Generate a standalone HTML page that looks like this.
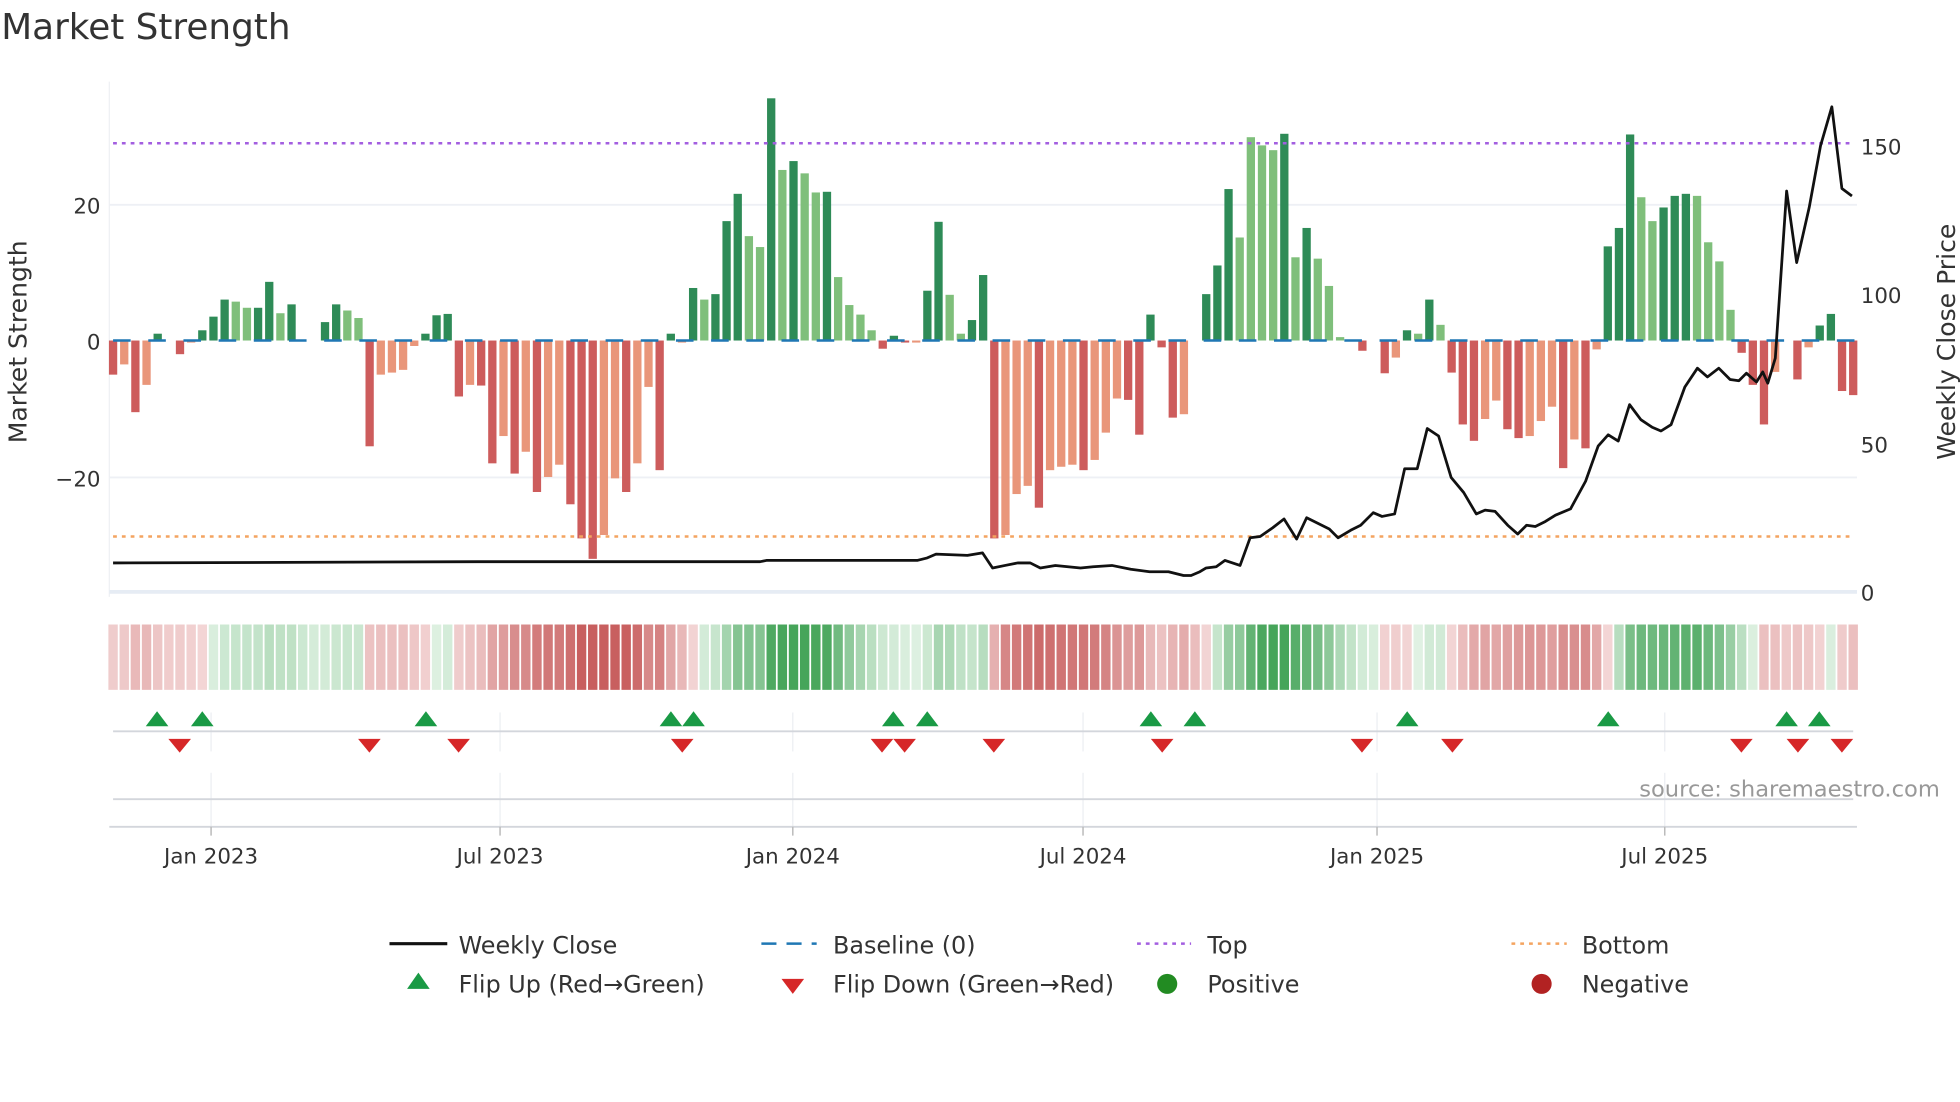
<!DOCTYPE html>
<html><head><meta charset="utf-8"><style>
html,body{margin:0;padding:0;background:#fff;width:1960px;height:1102px;overflow:hidden}
svg{display:block}
text{font-family:"DejaVu Sans","Liberation Sans",sans-serif;fill:#333}
</style></head><body>
<svg id="s" width="1960" height="1102" viewBox="0 0 1560 877" preserveAspectRatio="none" xmlns="http://www.w3.org/2000/svg">
<text x="1" y="31" font-size="28.5" fill="#333">Market Strength</text>
<line x1="87" y1="65" x2="87" y2="475" stroke="#eef0f4" stroke-width="1"/>
<line x1="87" y1="163" x2="1478" y2="163" stroke="#eef0f5" stroke-width="1.5"/>
<line x1="87" y1="380" x2="1478" y2="380" stroke="#eef0f5" stroke-width="1.5"/>
<line x1="87" y1="471" x2="1478" y2="471" stroke="#e6ecf4" stroke-width="3"/>
<text x="80" y="170" font-size="17" text-anchor="end">20</text>
<text x="80" y="278" font-size="17" text-anchor="end">0</text>
<text x="80" y="387" font-size="17" text-anchor="end">−20</text>
<text x="1481" y="123" font-size="17">150</text>
<text x="1481" y="241" font-size="17">100</text>
<text x="1481" y="360" font-size="17">50</text>
<text x="1481" y="478" font-size="17">0</text>
<text transform="translate(21,272) rotate(-90)" font-size="20" text-anchor="middle">Market Strength</text>
<text transform="translate(1556,272) rotate(-90)" font-size="20" text-anchor="middle">Weekly Close Price</text>
<g id="bars"></g>
<line x1="90" y1="271" x2="1476" y2="271" stroke="#1f77b4" stroke-width="2" stroke-dasharray="14,14"/>
<line x1="90" y1="114" x2="1476" y2="114" stroke="#a35ee0" stroke-width="2" stroke-dasharray="3,4"/>
<line x1="90" y1="427" x2="1476" y2="427" stroke="#f4a460" stroke-width="2" stroke-dasharray="3,4"/>
<polyline id="price" fill="none" stroke="#111" stroke-width="2.2" stroke-linejoin="round"/>
<g id="heat"></g>
<g stroke="#eceef2" stroke-width="1">
<line x1="168" y1="567" x2="168" y2="598"/><line x1="398" y1="567" x2="398" y2="598"/><line x1="631" y1="567" x2="631" y2="598"/><line x1="862" y1="567" x2="862" y2="598"/><line x1="1096" y1="567" x2="1096" y2="598"/><line x1="1325" y1="567" x2="1325" y2="598"/>
<line x1="168" y1="615" x2="168" y2="658"/><line x1="398" y1="615" x2="398" y2="658"/><line x1="631" y1="615" x2="631" y2="658"/><line x1="862" y1="615" x2="862" y2="658"/><line x1="1096" y1="615" x2="1096" y2="658"/><line x1="1325" y1="615" x2="1325" y2="658"/>
</g>
<line x1="90" y1="582" x2="1475" y2="582" stroke="#d3d6dc" stroke-width="1.5"/>
<line x1="90" y1="636" x2="1475" y2="636" stroke="#d3d6dc" stroke-width="1.5"/>
<line x1="87" y1="658" x2="1478" y2="658" stroke="#d3d6dc" stroke-width="1.5"/>
<g stroke="#bbb" stroke-width="1.2"><line x1="168" y1="658" x2="168" y2="665"/><line x1="398" y1="658" x2="398" y2="665"/><line x1="631" y1="658" x2="631" y2="665"/><line x1="862" y1="658" x2="862" y2="665"/><line x1="1096" y1="658" x2="1096" y2="665"/><line x1="1325" y1="658" x2="1325" y2="665"/></g>
<g id="marks"></g>
<text x="1544" y="634" font-size="18" text-anchor="end" style="fill:#999">source: sharemaestro.com</text>
<g font-size="17" text-anchor="middle">
<text x="168" y="687">Jan 2023</text><text x="398" y="687">Jul 2023</text><text x="631" y="687">Jan 2024</text><text x="862" y="687">Jul 2024</text><text x="1096" y="687">Jan 2025</text><text x="1325" y="687">Jul 2025</text>
</g>
<line x1="310" y1="751" x2="356" y2="751" stroke="#111" stroke-width="2.5"/>
<text x="365" y="759" font-size="19">Weekly Close</text>
<line x1="606" y1="751" x2="650" y2="751" stroke="#1f77b4" stroke-width="2" stroke-dasharray="12,8"/>
<text x="663" y="759" font-size="19">Baseline (0)</text>
<line x1="905" y1="751" x2="948" y2="751" stroke="#a35ee0" stroke-width="2" stroke-dasharray="3,4"/>
<text x="961" y="759" font-size="19">Top</text>
<line x1="1203" y1="751" x2="1247" y2="751" stroke="#f4a460" stroke-width="2" stroke-dasharray="3,4"/>
<text x="1259" y="759" font-size="19">Bottom</text>
<polygon points="333,774 342,787 324,787" fill="#1a9a45"/>
<text x="365" y="790" font-size="19">Flip Up (Red→Green)</text>
<polygon points="622,779 640,779 631,791" fill="#d62728"/>
<text x="663" y="790" font-size="19">Flip Down (Green→Red)</text>
<circle cx="929" cy="783" r="8" fill="#228b22"/>
<text x="961" y="790" font-size="19">Positive</text>
<circle cx="1227" cy="783" r="8" fill="#b22222"/>
<text x="1259" y="790" font-size="19">Negative</text>
</svg>
<script>
var V="-5R,-3.5O,-10.5R,-6.5O,1D,0,-2R,-0.3O,1.5D,3.5D,6D,5.7L,4.8L,4.8D,8.6D,4L,5.3D,0,0,2.7D,5.3D,4.4L,3.3L,-15.5R,-5O,-4.7O,-4.3O,-0.8O,1D,3.7D,3.9D,-8.2R,-6.5O,-6.6R,-18R,-14O,-19.5R,-16.3O,-22.2R,-20O,-18.2O,-24R,-29R,-32R,-28.5O,-20.2O,-22.2R,-18O,-6.8O,-19R,1D,-0.3O,7.7D,6L,6.8D,17.5D,21.5D,15.3L,13.7L,35.5D,25L,26.3D,24.5L,21.7L,21.8D,9.3L,5.2L,3.8L,1.5L,-1.2R,0.7D,-0.3R,-0.3O,7.3D,17.4D,6.7L,1L,3D,9.6D,-29R,-28.5O,-22.5O,-21.3O,-24.5R,-19O,-18.5O,-18.2O,-19R,-17.5O,-13.5O,-8.5O,-8.7R,-13.8R,3.8D,-1R,-11.3R,-10.8O,0,6.8D,11D,22.2D,15.1L,29.8L,28.6L,27.9L,30.3D,12.2L,16.5D,12L,8L,0.5L,0,-1.5R,0,-4.8R,-2.5O,1.5D,1L,6D,2.3L,-4.7R,-12.3R,-14.7R,-11.5O,-8.8O,-13R,-14.3R,-14O,-11.8O,-9.7O,-18.7R,-14.5O,-15.8R,-1.3O,13.8D,16.5D,30.2D,21L,17.5L,19.5D,21.2D,21.5D,21.2L,14.4L,11.6L,4.5L,-1.8R,-6.5R,-12.3R,-4.6O,0,-5.7R,-1O,2.2D,3.9D,-7.4R,-8R".split(",");
var C={D:"#2e8b57",L:"#7fbf7b",R:"#cd5c5c",O:"#e9967a"};
var ns="http://www.w3.org/2000/svg",b=document.getElementById("bars"),h=document.getElementById("heat");
var n=V.length,x0=90,dx=(1475-90)/(n-1),s=0;
function mix(a,c,t){return "rgb("+[0,1,2].map(function(i){return Math.round(a[i]+(c[i]-a[i])*t)}).join(",")+")"}
for(var i=0;i<n;i++){var v=parseFloat(V[i]),c=V[i].slice(-1),x=x0+i*dx;
 if(v!==0&&C[c]){var r=document.createElementNS(ns,"rect");var y=v>0?271-v*5.43:271;r.setAttribute("x",x-3.3);r.setAttribute("width",6.6);r.setAttribute("y",y);r.setAttribute("height",Math.abs(v)*5.43);r.setAttribute("fill",C[c]);b.appendChild(r);}
 s=0.6*s+0.4*v;var t=Math.min(Math.abs(s)/24,1);var col=s>=0?mix([225,242,228],[70,165,90],t):mix([243,214,214],[200,95,95],t);
 var q=document.createElementNS(ns,"rect");q.setAttribute("x",x-dx/2+0.7);q.setAttribute("width",dx-1.4);q.setAttribute("y",497);q.setAttribute("height",52);q.setAttribute("fill",col);h.appendChild(q);}
var P="90,448 380,447 605,447 610,446 730,446 738,444 745,441 770,442 782,440 790,452 800,450 810,448 820,448 828,452 840,450 860,452 870,451 885,450 900,453 915,455 930,455 942,458 948,458 955,455 960,452 968,451 975,446 987,450 995,428 1003,427 1013,420 1022,413 1032,429 1040,412 1050,417 1058,421 1065,428 1075,422 1083,418 1093,408 1100,411 1110,409 1118,373 1128,373 1136,341 1145,347 1155,380 1165,392 1175,409 1182,406 1190,407 1200,418 1208,425 1215,418 1222,419 1230,415 1238,410 1250,405 1262,383 1272,355 1280,346 1288,351 1297,322 1306,334 1315,340 1322,343 1330,338 1341,308 1351,293 1359,300 1368,293 1377,302 1384,303 1390,297 1398,304 1403,296 1407,305 1413,285 1422,152 1430,209 1440,165 1449,116 1458,85 1466,150 1474,156";
document.getElementById("price").setAttribute("points",P);
var m=document.getElementById("marks");
[125,161,339,534,552,711,738,916,951,1120,1280,1422,1448].forEach(function(x){var p=document.createElementNS(ns,"polygon");p.setAttribute("points",(x)+",566 "+(x+9)+",578 "+(x-9)+",578");p.setAttribute("fill","#1a9a45");m.appendChild(p)});
[143,294,365,543,702,720,791,925,1084,1156,1386,1431,1466].forEach(function(x){var p=document.createElementNS(ns,"polygon");p.setAttribute("points",(x-9)+",588 "+(x+9)+",588 "+x+",599");p.setAttribute("fill","#d62728");m.appendChild(p)});
</script>
</body></html>
